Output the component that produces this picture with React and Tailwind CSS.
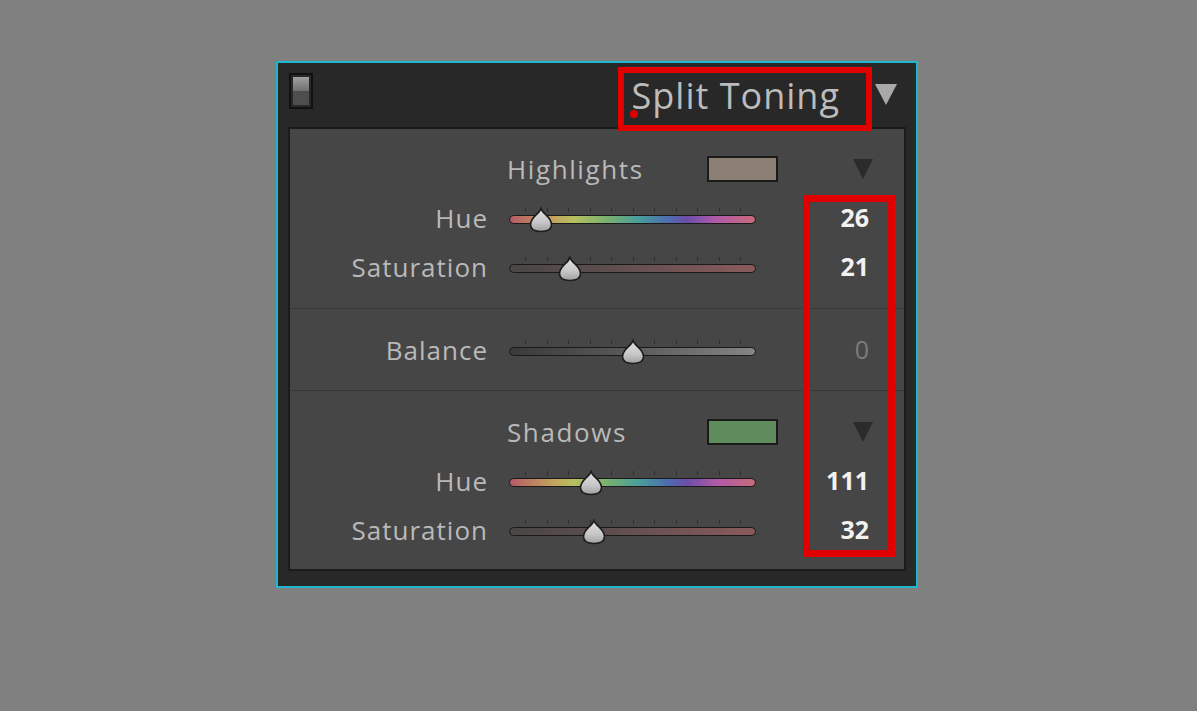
import React from 'react';

const TICKS = [0, 1, 2, 3, 4, 5, 6, 7, 8, 9, 10];

const tracks = {
  hue: 'bg-[linear-gradient(to_right,#b85a66_0%,#c2a45c_18%,#b6c060_26%,#78b070_40%,#4aa09a_52%,#4c6fb0_64%,#6a4ea8_72%,#b05aa8_84%,#c86a7c_100%)]',
  sat: 'bg-[linear-gradient(to_right,#4a4646_0%,#5e4e4e_40%,#8a5a5c_100%)]',
  balance: 'bg-[linear-gradient(to_right,#3a3a3a_0%,#5a5a5a_50%,#858585_100%)]',
};

const Thumb = ({ x }) => (
  <svg
    className="absolute top-[4px]"
    style={{ left: x - 13 }}
    width="26"
    height="26"
    viewBox="0 0 26 26"
  >
    <defs>
      <linearGradient id="thumbFill" x1="0" y1="0" x2="0" y2="1">
        <stop offset="0" stopColor="#e2e2e2" />
        <stop offset="0.6" stopColor="#c6c6c6" />
        <stop offset="1" stopColor="#a0a0a0" />
      </linearGradient>
    </defs>
    <path
      d="M13 1.5 C14.5 7 23.5 10 23.5 17.5 C23.5 22.5 19 24.5 13 24.5 C7 24.5 2.5 22.5 2.5 17.5 C2.5 10 11.5 7 13 1.5 Z"
      fill="url(#thumbFill)"
      stroke="#1c1c1c"
      strokeWidth="1.6"
    />
  </svg>
);

const Slider = ({ value, max, kind }) => {
  const x = 16 + (value / max) * 215;
  return (
    <div className="relative w-[247px] h-[30px]">
      {TICKS.map((t) => (
        <div
          key={t}
          className="absolute top-[5px] h-[4px] w-px bg-[#2e2e2e]"
          style={{ left: 16 + t * 21.5 }}
        />
      ))}
      <div className={`absolute left-0 right-0 top-[12px] h-[9px] rounded-full border border-[#1a1a1a] ${tracks[kind]}`} />
      <Thumb x={x} />
    </div>
  );
};

const Row = ({ label, value, max, kind, dim }) => (
  <div className="grid grid-cols-[198px_247px_92px] gap-x-[21px] items-center h-[49px]">
    <span className="text-right text-[26px] tracking-[1px] text-[#b9b9b9] leading-none">{label}</span>
    <Slider value={kind === 'balance' ? value + 100 : value} max={max} kind={kind} />
    <span
      className={`text-right text-[25px] leading-none ${dim ? 'text-[#7c7c7c]' : 'text-[#f2f2f2] font-bold'}`}
    >
      {value}
    </span>
  </div>
);

const Header = ({ label, swatch }) => (
  <div className="grid grid-cols-[198px_247px_92px] gap-x-[21px] items-center h-[49px]">
    <span />
    <div className="col-span-2 flex items-center">
      <span className="shrink-0 w-[200px] -ml-[2px] text-[26px] tracking-[1.6px] text-[#b9b9b9] leading-none">{label}</span>
      <div className={`shrink-0 w-[71px] h-[26px] border-2 border-[#1a1a1a] ${swatch}`} />
      <svg className="shrink-0 ml-[75px]" width="20" height="21" viewBox="0 0 20 21">
        <path d="M0 1 L20 1 L10 21 Z" fill="#2b2b2b" />
      </svg>
    </div>
  </div>
);

export default function App() {
  return (
    <div className="min-h-screen w-full bg-[#808080] pt-[61px] pl-[276px] font-['Open_Sans',sans-serif]">
      <div className="relative w-[642px] h-[527px] border-2 border-[#1fb6d0] bg-[#282828]">
        <div className="h-[64px] flex items-center pl-[11px] pr-[19px]">
          <div className="w-[24px] h-[36px] border-2 border-[#111] flex flex-col p-[2px] mt-[-8px]">
            <div className="flex-1 bg-[linear-gradient(to_bottom,#a0a0a0,#707070)]" />
            <div className="flex-1 bg-[#4e4e4e]" />
          </div>
          <span className="ml-auto text-[36px] tracking-[1px] leading-none text-[#bcbcbc] mt-[1px]">Split Toning</span>
          <svg className="ml-[35px] mt-[-3px]" width="22" height="22" viewBox="0 0 22 22">
            <path d="M0 1 L22 1 L11 22 Z" fill="#a9a9a9" />
          </svg>
        </div>

        <div className="mx-[10px] h-[444px] border-2 border-[#1b1b1b] bg-[#464646]">
          <div className="pt-[15px] pb-[17px] border-b border-[#383838]">
            <Header label="Highlights" swatch="bg-[#8b7e72]" />
            <Row label="Hue" value={26} max={360} kind="hue" />
            <Row label="Saturation" value={21} max={100} kind="sat" />
          </div>
          <div className="pt-[16px] pb-[16px] border-b border-[#383838]">
            <Row label="Balance" value={0} max={200} kind="balance" dim />
          </div>
          <div className="pt-[16px]">
            <Header label="Shadows" swatch="bg-[#5f8a5c]" />
            <Row label="Hue" value={111} max={360} kind="hue" />
            <Row label="Saturation" value={32} max={100} kind="sat" />
          </div>
        </div>

        {/* annotation boxes */}
        <div className="absolute left-[340px] top-[4px] w-[254px] h-[64px] border-[6px] border-[#e00000]" />
        <div className="absolute left-[352px] top-[47px] w-[8px] h-[8px] rounded-full bg-[#e00000]" />
        <div className="absolute left-[525px] top-[132px] w-[92px] h-[362px] border-[7px] border-[#e00000]" />
      </div>
    </div>
  );
}
